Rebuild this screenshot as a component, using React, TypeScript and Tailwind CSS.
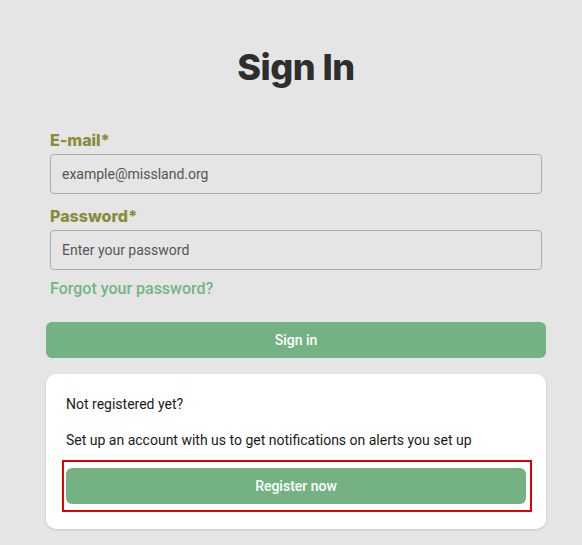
import { useState } from "react";

const SignIn = () => {
  const [email, setEmail] = useState("");
  const [password, setPassword] = useState("");

  return (
    <div className="min-h-[545px] w-full bg-[#e5e5e5] font-['Roboto',sans-serif]">
      <div className="ml-[46px] w-[500px] pt-[46px]">
        <h1 className="text-center font-['Inter',sans-serif] text-[36px] font-extrabold leading-[42px] text-[#2e2e2e] tracking-[-0.5px]">
          Sign In
        </h1>
        <form className="mt-[42px] px-[4px]" onSubmit={(e) => e.preventDefault()}>
          <label className="block font-['Inter',sans-serif] text-[16px] font-extrabold leading-[20px] text-[#8a8c3c]">
            E-mail*
          </label>
          <input
            value={email}
            onChange={(e) => setEmail(e.target.value)}
            placeholder="example@missland.org"
            className="mt-[4px] block h-[40px] w-[492px] rounded-[4px] border border-[#aaaaaa] bg-[#e5e5e5] px-[11px] text-[14px] text-[#333] placeholder:text-[#555] outline-none"
          />
          <label className="mt-[12px] block font-['Inter',sans-serif] text-[16px] font-extrabold leading-[20px] text-[#8a8c3c]">
            Password*
          </label>
          <input
            type="password"
            value={password}
            onChange={(e) => setPassword(e.target.value)}
            placeholder="Enter your password"
            className="mt-[4px] block h-[40px] w-[492px] rounded-[4px] border border-[#aaaaaa] bg-[#e5e5e5] px-[11px] text-[14px] text-[#333] placeholder:text-[#555] outline-none"
          />
          <a className="mt-[8px] block text-[16px] font-medium leading-[22px] text-[#74b586]">
            Forgot your password?
          </a>
        </form>
        <button className="mt-[22px] block h-[36px] w-[500px] rounded-[6px] bg-[#74b283] text-[14px] font-medium text-white">
          Sign in
        </button>
        <div className="mt-[16px] rounded-[10px] bg-white px-[16px] pb-[17px] pt-[20px] shadow-[0_1px_3px_rgba(0,0,0,0.12)]">
          <p className="px-[4px] text-[14px] leading-[20px] text-[#1a1a1a]">Not registered yet?</p>
          <p className="mt-[16px] px-[4px] text-[14px] leading-[20px] text-[#1a1a1a]">
            Set up an account with us to get notifications on alerts you set up
          </p>
          <div className="mr-[-2px] mt-[10px] border-2 border-[#e00000] py-[6px] pl-[2px] pr-[4px]">
            <button className="block h-[36px] w-full rounded-[6px] bg-[#74b283] text-[14px] font-medium text-white">
              Register now
            </button>
          </div>
        </div>
      </div>
    </div>
  );
};

export default function App() {
  return <SignIn />;
}
